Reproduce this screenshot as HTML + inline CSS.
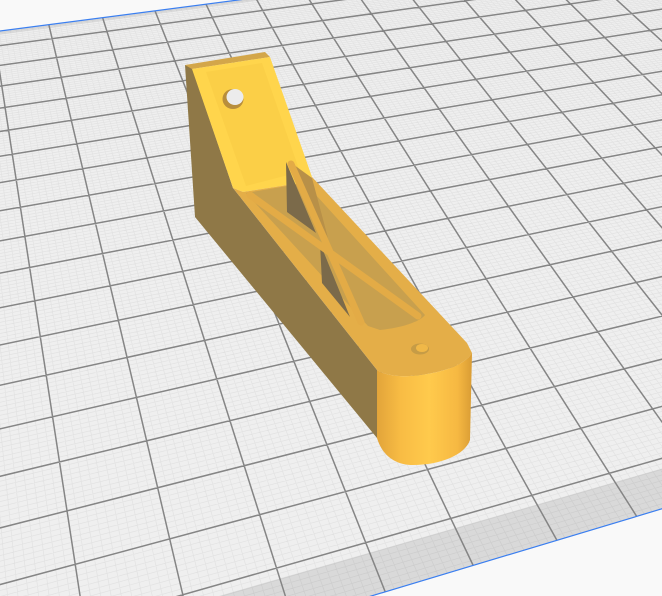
<!DOCTYPE html>
<html><head><meta charset="utf-8"><style>
html,body{margin:0;padding:0;background:#f9f9f9;overflow:hidden;width:662px;height:596px}
svg{display:block}
</style></head><body>
<svg id="s" width="662" height="596" viewBox="0 0 662 596" xmlns="http://www.w3.org/2000/svg">
<defs>
<linearGradient id="cyl" x1="0" x2="1" y1="0" y2="0">
<stop offset="0" stop-color="#e2a43a"/><stop offset="0.25" stop-color="#f8bc44"/>
<stop offset="0.55" stop-color="#ffca4c"/><stop offset="0.85" stop-color="#f6b842"/>
<stop offset="1" stop-color="#d99c34"/></linearGradient>
</defs>
<rect width="662" height="596" fill="#f9f9f9"/>
<g id="plate"></g>
<g id="obj">
<path d="M185,65 L192,68 L233,188 L377,370 L377,438 L195,217 Z" fill="#8f7847"/>
<path d="M185,65 L265,52 L270,57 L192,69 Z" fill="#d3a64a"/>
<path d="M192,69 L270,57 L312,177 L307,182 L243,192 L233,188 Z" fill="#ffd54c"/>
<path d="M206,72 L262,63 L300,172 L246,186 Z" fill="#fbcf47"/>
<ellipse cx="233" cy="99" rx="10.5" ry="10" fill="#b88e3c"/>
<ellipse cx="235" cy="97" rx="8.5" ry="8" fill="#ececec"/>
<path d="M233,188 L243,192 L307,182 L312,177 L467,343 L472,353 C465,365 440,374 410,376 C395,377 383,374 377,370 Z" fill="#e4ae48"/>
<path d="M246,193 L305,183 L425,315 C420,322 400,328 380,330 L368,326 Z" fill="#c8a04e"/>
<path d="M290,162 L312,178 L328,238 Z" fill="#b89048"/>
<path d="M286,162 L316,233 L287,212 Z" fill="#7b6a4a"/>
<path d="M320,243 L350,317 L322,283 Z" fill="#7b6a4a"/>
<g stroke="#e3ab46" stroke-width="7" stroke-linecap="round">
<line x1="250" y1="195" x2="418" y2="316"/>
<line x1="291" y1="164" x2="361" y2="322"/>
</g>
<path d="M377,370 C383,374 395,377 410,376 C440,374 465,365 472,353 L470,440 C465,455 440,465 413,465 C395,465 382,455 377,438 Z" fill="url(#cyl)"/>
<ellipse cx="420" cy="349" rx="9" ry="5.5" fill="#c69c46"/>
<ellipse cx="422" cy="348" rx="6" ry="4" fill="#f0b848"/>
</g>
</svg>
<script>
(function(){
var v1x=3985,v1y=-488,v2x=-114,v2y=-668,ox=118.3,oy=320.3,a=0.0172*1.15,b=0.0315*1.15;
function P(X,Y){var w=a*X+b*Y+1;return [(a*X*v1x+b*Y*v2x+ox)/w,(a*X*v1y+b*Y*v2y+oy)/w];}
function inv(x,y){var A=x-v1x,B=x-v2x,C=ox-x,D=y-v1y,E=y-v2y,F=oy-y;var det=A*E-B*D;var u=(C*E-B*F)/det,v=(A*F-C*D)/det;return [u/a,v/b];}
var Yt=inv(0,31)[1], Yb=inv(378,594)[1];
var g=document.getElementById('plate'),ns='http://www.w3.org/2000/svg';
function xmin(Y){return (0.08-1-b*Y)/a;}
var X0=Math.max(-40,xmin(Yb)),X1=80;
function pt(p){return p[0].toFixed(1)+','+p[1].toFixed(1);}
function poly(pts,fill){var e=document.createElementNS(ns,'polygon');e.setAttribute('points',pts.map(pt).join(' '));e.setAttribute('fill',fill);g.appendChild(e);return e;}
poly([P(X0,Yb),P(X1,Yb),P(X1,Yt),P(xmin(Yt)>X0?xmin(Yt):X0,Yt)],'#efefef');
var s='',m='';
function seg(p,q){return 'M'+pt(p)+'L'+pt(q);}
for(var i=Math.ceil(X0*10);i<=X1*10;i++){var X=i/10;var d=seg(P(X,Yb),P(X,Yt));if(i%10===0)m+=d;else s+=d;}
for(var j=Math.ceil(Yb*10);j<=Yt*10;j++){var Y=j/10;var xm=Math.max(X0,xmin(Y));var d=seg(P(xm,Y),P(X1,Y));if(j%10===0)m+=d;else s+=d;}
function path(d,c,w){var e=document.createElementNS(ns,'path');e.setAttribute('d',d);e.setAttribute('stroke',c);e.setAttribute('stroke-width',w);e.setAttribute('fill','none');g.appendChild(e);}
path(s,'#e2e2e2',0.7);
poly([P(X0,Yb),P(X1,Yb),P(X1,Yb+0.7),P(X0,Yb+0.7)],'rgba(0,0,0,0.09)');
poly([P(xmin(Yt-0.18),Yt-0.18),P(X1,Yt-0.18),P(X1,Yt),P(xmin(Yt),Yt)],'rgba(0,0,0,0.08)');
path(m,'#858585',1.5);
path(seg(P(X0,Yb),P(X1,Yb)),'#3b7ff0',1.2);
path(seg(P(xmin(Yt),Yt),P(X1,Yt)),'#3b7ff0',1.2);
})();
</script>
</body></html>
